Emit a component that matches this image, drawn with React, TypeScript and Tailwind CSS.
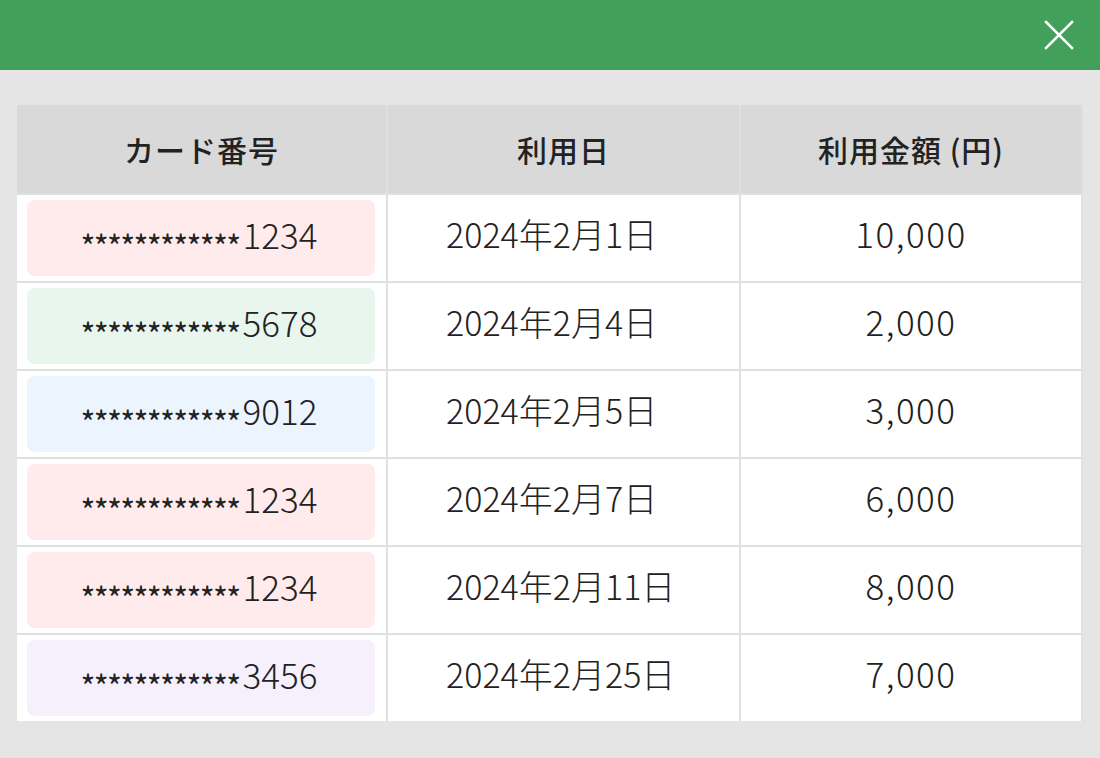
interface Usage {
  card: string;
  date: string;
  amount: string;
  tone: string;
}

const ROWS: Usage[] = [
  { card: '1234', date: '2024年2月1日', amount: '10,000', tone: 'bg-[#ffebeb]' },
  { card: '5678', date: '2024年2月4日', amount: '2,000', tone: 'bg-[#e8f6ee]' },
  { card: '9012', date: '2024年2月5日', amount: '3,000', tone: 'bg-[#ecf4fe]' },
  { card: '1234', date: '2024年2月7日', amount: '6,000', tone: 'bg-[#ffebeb]' },
  { card: '1234', date: '2024年2月11日', amount: '8,000', tone: 'bg-[#ffebeb]' },
  { card: '3456', date: '2024年2月25日', amount: '7,000', tone: 'bg-[#f6effc]' },
];

const FONT = "font-['Noto_Sans_CJK_JP','Noto_Sans',sans-serif]";

function CloseIcon() {
  return (
    <svg width="30" height="30" viewBox="0 0 30 30" fill="none" stroke="#fff" strokeWidth="2.6" strokeLinecap="square">
      <line x1="2" y1="2" x2="28" y2="28" />
      <line x1="28" y1="2" x2="2" y2="28" />
    </svg>
  );
}

export default function App() {
  return (
    <div className={`w-[1100px] h-[758px] bg-[#e5e5e5] ${FONT} text-[#222]`}>
      {/* header bar */}
      <div className="h-[70px] bg-[#43a05a] flex items-center justify-end pr-[26px]">
        <CloseIcon />
      </div>

      <div className="px-[17px] pt-[35px]">
        <div className="grid grid-cols-[369px_351px_340px] gap-[2px] bg-[#e0e0e0]">
          {/* table head */}
          <div className="h-[88px] bg-[#d9d9d9] flex items-center justify-center text-[30px] font-medium tracking-[1px]">
            カード番号
          </div>
          <div className="h-[88px] bg-[#d9d9d9] flex items-center justify-center text-[30px] font-medium tracking-[1px]">
            利用日
          </div>
          <div className="h-[88px] bg-[#d9d9d9] flex items-center justify-center text-[30px] font-medium tracking-[1px]">
            利用金額 (円)
          </div>

          {ROWS.map((row, i) => (
            <div key={i} className="contents">
              <div className="h-[86px] bg-white pl-[10px] pr-[11px] py-[5px]">
                <div className={`h-full rounded-[8px] ${row.tone} flex items-center justify-center pb-[8px] pr-[4px] text-[35px] font-light`}>
                  <span className="relative top-[11px] text-[32px] font-normal tracking-[-1.7px] pr-[3px]">************</span>
                  <span>{row.card}</span>
                </div>
              </div>
              <div className="h-[86px] bg-white flex items-center pl-[58px] pb-[10px] text-[34px] font-light">
                {row.date}
              </div>
              <div className="h-[86px] bg-white flex items-center justify-center pb-[10px] text-[35px] font-light tracking-[1.5px]">
                {row.amount}
              </div>
            </div>
          ))}
        </div>
      </div>
    </div>
  );
}
